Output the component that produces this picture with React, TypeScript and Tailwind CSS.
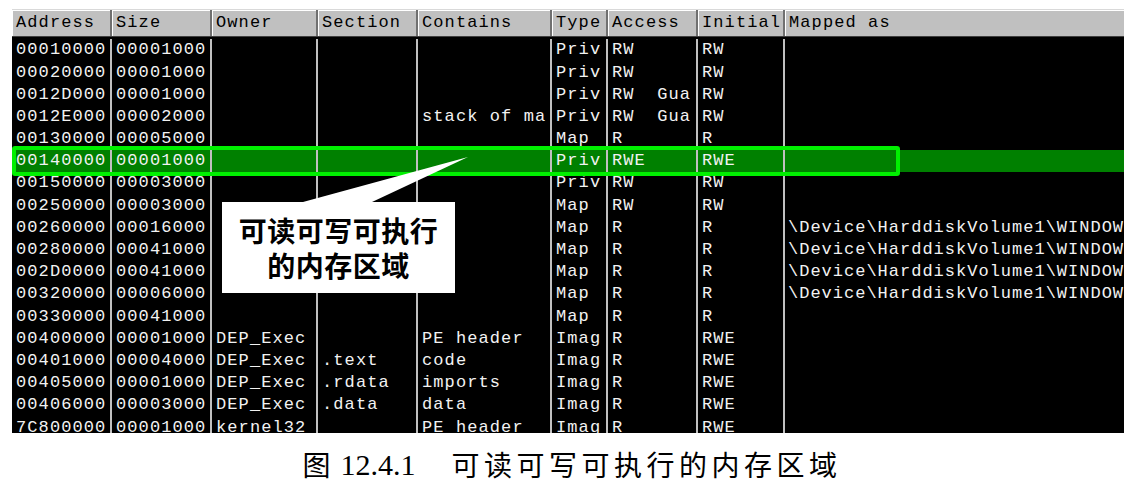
const mono = { fontFamily: '"Liberation Mono", "DejaVu Sans Mono", monospace' };

type Row = [string, string, string, string, string, string, string, string, string];

const dev = '\\Device\\HarddiskVolume1\\WINDOW';

const rows: Row[] = [
  ['00010000', '00001000', '', '', '', 'Priv', 'RW', 'RW', ''],
  ['00020000', '00001000', '', '', '', 'Priv', 'RW', 'RW', ''],
  ['0012D000', '00001000', '', '', '', 'Priv', 'RW  Gua', 'RW', ''],
  ['0012E000', '00002000', '', '', 'stack of ma', 'Priv', 'RW  Gua', 'RW', ''],
  ['00130000', '00005000', '', '', '', 'Map', 'R', 'R', ''],
  ['00140000', '00001000', '', '', '', 'Priv', 'RWE', 'RWE', ''],
  ['00150000', '00003000', '', '', '', 'Priv', 'RW', 'RW', ''],
  ['00250000', '00003000', '', '', '', 'Map', 'RW', 'RW', ''],
  ['00260000', '00016000', '', '', '', 'Map', 'R', 'R', dev],
  ['00280000', '00041000', '', '', '', 'Map', 'R', 'R', dev],
  ['002D0000', '00041000', '', '', '', 'Map', 'R', 'R', dev],
  ['00320000', '00006000', '', '', '', 'Map', 'R', 'R', dev],
  ['00330000', '00041000', '', '', '', 'Map', 'R', 'R', ''],
  ['00400000', '00001000', 'DEP_Exec', '', 'PE header', 'Imag', 'R', 'RWE', ''],
  ['00401000', '00004000', 'DEP_Exec', '.text', 'code', 'Imag', 'R', 'RWE', ''],
  ['00405000', '00001000', 'DEP_Exec', '.rdata', 'imports', 'Imag', 'R', 'RWE', ''],
  ['00406000', '00003000', 'DEP_Exec', '.data', 'data', 'Imag', 'R', 'RWE', ''],
  ['7C800000', '00001000', 'kernel32', '', 'PE header', 'Imag', 'R', 'RWE', ''],
];

const headers = ['Address', 'Size', 'Owner', 'Section', 'Contains', 'Type', 'Access', 'Initial', 'Mapped as'];

// column widths incl. the 2px divider on the right
const widths = ['w-[100px]', 'w-[100px]', 'w-[106px]', 'w-[100px]', 'w-[134px]', 'w-[56px]', 'w-[90px]', 'w-[87px]', 'w-[339px]'];

function Callout() {
  return (
    <>
      <svg className="absolute left-0 top-0" width="1144" height="487" viewBox="0 0 1144 487">
        <path d="M222 202 L303 202 L468 157 L372 202 L455 202 L455 293 L222 293 Z" fill="#ffffff" />
      </svg>
      <div
        className="absolute left-[222px] top-[202px] w-[233px] h-[91px] flex flex-col items-center justify-center text-[28px] leading-[35px] font-bold text-black"
        style={{ fontFamily: '"Noto Sans CJK SC", sans-serif' }}
      >
        <div className="tracking-[0.5px]">可读可写可执行</div>
        <div className="tracking-[0.5px]">的内存区域</div>
      </div>
    </>
  );
}

export default function App() {
  return (
    <div className="relative w-[1144px] h-[487px] bg-white overflow-hidden">
      <div className="ml-[12px] mt-[9px] w-[1112px] border-t border-[#d9d9d9]" style={mono}>
        {/* header */}
        <div className="flex h-[27px] bg-[#c0c0c0] border-b border-[#404040]">
          {headers.map((h, i) => (
            <div
              key={h}
              className={`${widths[i]} shrink-0 h-full flex items-center pl-[4px] text-[17px] tracking-[1.1px] text-black whitespace-pre overflow-hidden shadow-[inset_1px_1px_0_#ffffff] ${
                i < headers.length - 1 ? 'border-r-2 border-[#707070]' : ''
              }`}
            >
              {h}
            </div>
          ))}
        </div>

        {/* rows */}
        <div className="h-[396px] bg-black pt-[2px] overflow-hidden">
          {rows.map((r, ri) => (
            <div key={ri} className={`flex h-[22.2px] ${ri === 5 ? 'bg-[#008000]' : ''}`}>
              {r.map((c, ci) => (
                <div
                  key={ci}
                  className={`${widths[ci]} shrink-0 h-full flex items-center text-[17px] text-[#f2f2f2] whitespace-pre overflow-hidden ${
                    ci < r.length - 1 ? 'border-r-2 border-[#c0c0c0] pl-[4px] tracking-[1.1px]' : 'pl-[3px] tracking-[1px]'
                  }`}
                >
                  {c}
                </div>
              ))}
            </div>
          ))}
        </div>
      </div>

      {/* annotation outline on the RWE row */}
      <div className="absolute left-[12px] top-[146px] w-[888px] h-[30px] border-[4px] border-[#00f000] rounded-[3px]" />

      <Callout />

      {/* caption */}
      <div className="absolute left-0 right-0 top-[446px] flex justify-center items-center h-[36px] text-black">
        <span className="text-[28px]" style={{ fontFamily: '"Noto Sans CJK SC", sans-serif' }}>图</span>
        <span className="ml-[10px] text-[30px]" style={{ fontFamily: '"Liberation Serif", serif' }}>12.4.1</span>
        <span className="ml-[36px] text-[28px] tracking-[4.5px]" style={{ fontFamily: '"Noto Sans CJK SC", sans-serif' }}>
          可读可写可执行的内存区域
        </span>
      </div>
    </div>
  );
}
